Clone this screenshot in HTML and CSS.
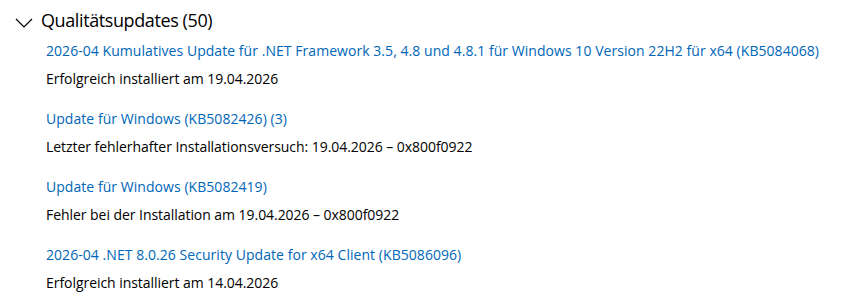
FILE: index.html
```html
<!DOCTYPE html>
<html>
<head>
	<meta charset="utf-8">
	<title>Qualitätsupdates</title>
	<link rel="stylesheet" href="styles.css">
</head>
<body>

	<div class="group">
		<div class="group-head">
			<svg class="chevron" width="18" height="10" viewBox="0 0 18 10">
				<path d="M1 1 L9 9 L17 1" fill="none" stroke="#000" stroke-width="1.2"/>
			</svg>
			<h2>Qualitätsupdates (50)</h2>
		</div>

		<ul class="updates">
			<li>
				<a href="#">2026-04 Kumulatives Update für .NET Framework 3.5, 4.8 und 4.8.1 für Windows 10 Version 22H2 für x64 (KB5084068)</a>
				<p>Erfolgreich installiert am 19.04.2026</p>
			</li>
			<li>
				<a href="#">Update für Windows (KB5082426) (3)</a>
				<p>Letzter fehlerhafter Installationsversuch: 19.04.2026 – 0x800f0922</p>
			</li>
			<li>
				<a href="#">Update für Windows (KB5082419)</a>
				<p>Fehler bei der Installation am 19.04.2026 – 0x800f0922</p>
			</li>
			<li>
				<a href="#">2026-04 .NET 8.0.26 Security Update for x64 Client (KB5086096)</a>
				<p>Erfolgreich installiert am 14.04.2026</p>
			</li>
		</ul>
	</div>

</body>
</html>
```

FILE: styles.css
```css
body {
	margin: 0;
	background-color: #fff;
	color: #000;
	font-family: "Open Sans", "Noto Sans", sans-serif;
}

.group {
	padding: 8px 0 0 15px;
}

.group-head {
	display: flex;
	align-items: center;
	gap: 8px;
	height: 23px;
}

.chevron {
	margin-top: 6px;
}

h2 {
	margin: 0;
	font-size: 18px;
	font-weight: normal;
	letter-spacing: -0.4px;
}

.updates {
	list-style: none;
	margin: 0;
	padding: 0 0 0 31px;
}

.updates li {
	display: flex;
	flex-direction: column;
	align-items: flex-start;
	gap: 8px;
	padding-top: 10px;
	padding-bottom: 10px;
}

.updates a {
	color: #0066b8;
	text-decoration: none;
	font-size: 14px;
	line-height: 20px;
	letter-spacing: 0.05px;
}

.updates p {
	margin: 0;
	font-size: 14px;
	line-height: 20px;
	letter-spacing: -0.05px;
}
```
